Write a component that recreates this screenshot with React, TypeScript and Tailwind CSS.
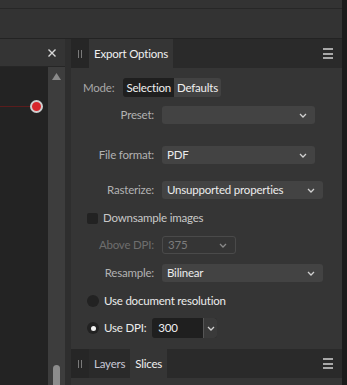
import React from 'react';

function Chevron({ className = '' }: { className?: string }) {
  return (
    <svg width="8" height="5" viewBox="0 0 8 5" className={className}>
      <path d="M1 1 L4 4 L7 1" fill="none" stroke="currentColor" strokeWidth="1.3" />
    </svg>
  );
}

function Hamburger() {
  return (
    <div className="flex flex-col gap-[2.5px]">
      <div className="w-[10px] h-[2px] bg-[#a8a8a8]" />
      <div className="w-[10px] h-[2px] bg-[#a8a8a8]" />
      <div className="w-[10px] h-[2px] bg-[#a8a8a8]" />
    </div>
  );
}

function Grip() {
  return (
    <div className="w-[18px] self-stretch bg-[#262626] flex items-center justify-center gap-[2px]">
      <div className="w-px h-[8px] bg-[#7a7a7a]" />
      <div className="w-px h-[8px] bg-[#7a7a7a]" />
    </div>
  );
}

function Select({ value, width, disabled = false }: { value: string; width: string; disabled?: boolean }) {
  return (
    <div
      className={`${width} h-[18px] rounded-[3px] flex items-center justify-between pl-[5px] pr-[8px] ${
        disabled ? 'border border-[#4a4a4a] text-[#7c7c7c]' : 'bg-[#434343] text-[#ececec]'
      }`}
    >
      <span>{value}</span>
      <Chevron className={disabled ? 'text-[#8a8a8a]' : 'text-[#d0d0d0]'} />
    </div>
  );
}

function Row({ label, children, className = '', disabled = false }: { label: string; children: React.ReactNode; className?: string; disabled?: boolean }) {
  return (
    <div className={`flex items-center h-[18px] ${className}`}>
      <span className={`w-[84px] text-right pr-[1px] ${disabled ? 'text-[#6e6e6e]' : 'text-[#b2b2b2]'}`}>{label}</span>
      <div className="ml-[7px]">{children}</div>
    </div>
  );
}

export default function App() {
  return (
    <div
      className="w-[347px] h-[385px] overflow-hidden bg-[#333333] flex flex-col text-[11.5px] tracking-[-0.2px] leading-none"
      style={{ fontFamily: 'Lato, "Noto Sans", sans-serif' }}
    >
      {/* top bars */}
      <div className="flex h-[39px]">
        <div className="flex-1 flex flex-col">
          <div className="h-[9px] bg-[#333333] border-b border-[#272727]" />
          <div className="flex-1 bg-[#333333] border-b border-[#232323]" />
        </div>
        <div className="w-[5px] bg-[#1b1b1b]" />
      </div>

      <div className="flex flex-1 min-h-0">
        {/* document panel */}
        <div className="w-[65px] flex flex-col">
          <div className="h-[28px] bg-[#343434] border-b border-[#262626] flex items-center justify-end pr-[9px]">
            <svg width="8" height="8" viewBox="0 0 8 8">
              <path d="M0.5 0.5 L7.5 7.5 M7.5 0.5 L0.5 7.5" stroke="#d8d8d8" strokeWidth="1.4" />
            </svg>
          </div>
          <div className="flex flex-1">
            <div className="w-[48px] bg-[#232323] flex flex-col">
              <div className="mt-[33px] flex items-center">
                <div className="w-[30px] h-px bg-[#5a1c1c]" />
                <div className="w-[13px] h-[13px] rounded-full bg-[#d8262b] border-2 border-[#cfcfcf]" />
              </div>
            </div>
            <div className="w-[17px] bg-[#3d3d3d] flex flex-col items-center justify-between pt-[6px]">
              <svg width="9" height="7" viewBox="0 0 9 7">
                <path d="M4.5 0 L9 7 L0 7 Z" fill="#8a8a8a" />
              </svg>
              <div className="w-[7px] h-[20px] rounded-t-full bg-[#8c8c8c]" />
            </div>
          </div>
        </div>

        <div className="w-[6px] bg-[#2e2e2e]" />

        {/* right panels */}
        <div className="flex-1 flex flex-col bg-[#353535]">
          <div className="h-[29px] bg-[#2a2a2a] flex items-stretch">
            <Grip />
            <div className="bg-[#353535] px-[5px] flex items-center text-[#f0f0f0]">Export Options</div>
            <div className="flex-1" />
            <div className="flex items-center pr-[9px]">
              <Hamburger />
            </div>
          </div>

          <div className="h-[281px] flex flex-col pt-[10px]">
            <div className="flex items-center h-[19px] pl-[12px]">
              <span className="text-[#a8a8a8]">Mode:</span>
              <div className="ml-[9px] flex h-[19px] rounded-[3px] overflow-hidden">
                <div className="bg-[#1f1f1f] px-[3px] flex items-center text-[#f0f0f0]">Selection</div>
                <div className="bg-[#424242] px-[3px] flex items-center text-[#f0f0f0]">Defaults</div>
              </div>
            </div>

            <Row label="Preset:" className="mt-[9px]">
              <Select value="" width="w-[153px]" />
            </Row>
            <Row label="File format:" className="mt-[22px]">
              <Select value="PDF" width="w-[153px]" />
            </Row>
            <Row label="Rasterize:" className="mt-[17px]">
              <Select value="Unsupported properties" width="w-[161px]" />
            </Row>

            <div className="mt-[10px] h-[18px] flex items-center pl-[16px]">
              <div className="w-[11px] h-[11px] rounded-[2px] bg-[#222222]" />
              <span className="ml-[5px] text-[#c8c8c8]">Downsample images</span>
            </div>

            <Row label="Above DPI:" className="mt-[9px]" disabled>
              <Select value="375" width="w-[74px]" disabled />
            </Row>
            <Row label="Resample:" className="mt-[10px]">
              <Select value="Bilinear" width="w-[161px]" />
            </Row>

            <div className="mt-[10px] h-[18px] flex items-center pl-[16px]">
              <div className="w-[12px] h-[12px] rounded-full bg-[#222222]" />
              <span className="ml-[5px] text-[#ececec]">Use document resolution</span>
            </div>

            <div className="mt-[8px] h-[20px] flex items-center pl-[16px]">
              <div className="w-[12px] h-[12px] rounded-full bg-[#222222] flex items-center justify-center">
                <div className="w-[5px] h-[5px] rounded-full bg-[#f2f2f2]" />
              </div>
              <span className="ml-[5px] text-[#ececec]">Use DPI:</span>
              <div className="ml-[6px] w-[65px] h-[20px] rounded-[3px] bg-[#1f1f1f] flex items-stretch overflow-hidden">
                <span className="flex-1 flex items-center pl-[6px] text-[#f0f0f0]">300</span>
                <div className="w-[14px] bg-[#3a3a3a] border-l border-[#555] flex items-center justify-center text-[#d0d0d0]">
                  <Chevron />
                </div>
              </div>
            </div>
          </div>

          <div className="h-[29px] bg-[#2a2a2a] flex items-stretch">
            <Grip />
            <div className="px-[5px] flex items-center text-[#c8c8d8]">Layers</div>
            <div className="bg-[#353535] px-[5px] flex items-center text-[#f0f0f0]">Slices</div>
            <div className="flex-1" />
            <div className="flex items-center pr-[9px]">
              <Hamburger />
            </div>
          </div>
          <div className="flex-1 bg-[#353535]" />
        </div>

        <div className="w-[5px] bg-[#1b1b1b]" />
      </div>
    </div>
  );
}
